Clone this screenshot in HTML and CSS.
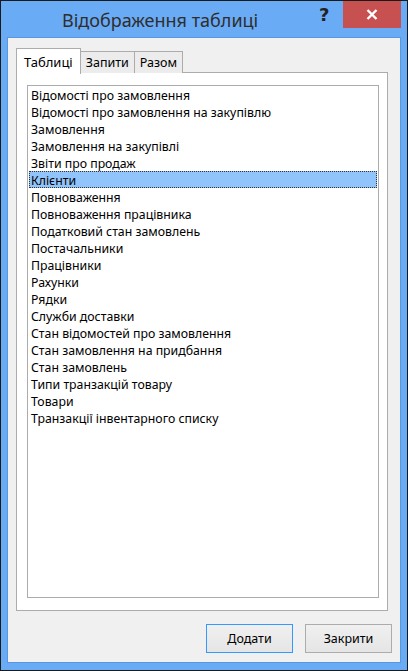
FILE: index.html
```html
<!DOCTYPE html>
<html lang="uk">
<head>
  <meta charset="UTF-8">
  <title>Відображення таблиці</title>
  <link rel="stylesheet" href="styles.css">
</head>
<body>
  <div class="window">
    <div class="titlebar">
      <div class="title">Відображення таблиці</div>
      <div class="help">?</div>
      <div class="close">
        <svg width="12" height="11" viewBox="0 0 12 11">
          <path d="M1.5 1 L10.5 10 M10.5 1 L1.5 10" stroke="#fff" stroke-width="2.4"/>
        </svg>
      </div>
    </div>

    <div class="content">
      <div class="tabs">
        <div class="tab active">Таблиці</div>
        <div class="tab">Запити</div>
        <div class="tab">Разом</div>
      </div>

      <div class="panel">
        <ul class="listbox">
          <li>Відомості про замовлення</li>
          <li>Відомості про замовлення на закупівлю</li>
          <li>Замовлення</li>
          <li>Замовлення на закупівлі</li>
          <li>Звіти про продаж</li>
          <li class="selected">Клієнти</li>
          <li>Повноваження</li>
          <li>Повноваження працівника</li>
          <li>Податковий стан замовлень</li>
          <li>Постачальники</li>
          <li>Працівники</li>
          <li>Рахунки</li>
          <li>Рядки</li>
          <li>Служби доставки</li>
          <li>Стан відомостей про замовлення</li>
          <li>Стан замовлення на придбання</li>
          <li>Стан замовлень</li>
          <li>Типи транзакцій товару</li>
          <li>Товари</li>
          <li>Транзакції інвентарного списку</li>
        </ul>
      </div>

      <div class="buttons">
        <button class="btn default">Додати</button>
        <button class="btn">Закрити</button>
      </div>
    </div>
  </div>
</body>
</html>
```

FILE: styles.css
```css
body {
  margin: 0;
  font-family: 'Noto Sans', 'Open Sans', sans-serif;
}
.window {
  width: 408px;
  height: 671px;
  box-sizing: border-box;
  border: 1px solid #1a1a1a;
  background: #6aabf5;
  display: flex;
  flex-direction: column;
}
.titlebar {
  height: 36px;
  display: flex;
  align-items: flex-start;
  padding-left: 61px;
}
.title {
  font-size: 18px;
  color: #2e2e2e;
  margin-top: 7px;
  width: 257px;
  white-space: nowrap;
}
.help {
  font-family: 'DejaVu Sans', sans-serif;
  font-weight: bold;
  font-size: 18px;
  color: #222;
  margin-top: 3px;
  width: 24px;
}
.close {
  width: 58px;
  height: 27px;
  background: #c75050;
  display: flex;
  align-items: center;
  justify-content: center;
}
.content {
  margin: 1px 7px 8px 7px;
  flex: 1;
  background: #f0f0f0;
  box-shadow: 0 0 0 1px #5b97dc;
  padding: 10px 8px 0 8px;
  display: flex;
  flex-direction: column;
}
.tabs {
  display: flex;
  align-items: flex-start;
  height: 24px;
  position: relative;
  z-index: 1;
}
.tab {
  font-size: 12.5px;
  height: 21px;
  line-height: 21px;
  margin-top: 3px;
  padding: 0 5px;
  border: 1px solid #acacac;
  border-bottom: none;
  background: #ececec;
  color: #000;
  margin-left: -1px;
}
.tab.active {
  margin-left: 0;
  margin-top: 0;
  height: 25px;
  line-height: 27px;
  font-size: 13px;
  padding: 0 7px;
  background: #fff;
}
.panel {
  width: 352px;
  height: 525px;
  border: 1px solid #acacac;
  background: #fff;
  padding: 12px 8px 0 10px;
}
.listbox {
  list-style: none;
  margin: 0;
  padding: 0;
  height: 511px;
  border: 1px solid #acacac;
  font-size: 12.3px;
}
.listbox li {
  height: 16px;
  padding-top: 1px;
  line-height: 17px;
  padding-left: 3px;
  color: #000;
  white-space: nowrap;
}
.listbox li.selected {
  background: #91c4fb;
  outline: 1px dotted #333;
  outline-offset: -1px;
  margin: 0 1px;
  padding-left: 2px;
}
.buttons {
  display: flex;
  justify-content: flex-end;
  gap: 12px;
  margin-top: 13px;
}
.btn {
  width: 87px;
  height: 29px;
  font-family: 'Noto Sans', sans-serif;
  font-size: 12.5px;
  color: #000;
  background: linear-gradient(#f0f0f0, #e5e5e5);
  border: 1px solid #acacac;
}
.btn.default {
  border-color: #3399ff;
}
```
